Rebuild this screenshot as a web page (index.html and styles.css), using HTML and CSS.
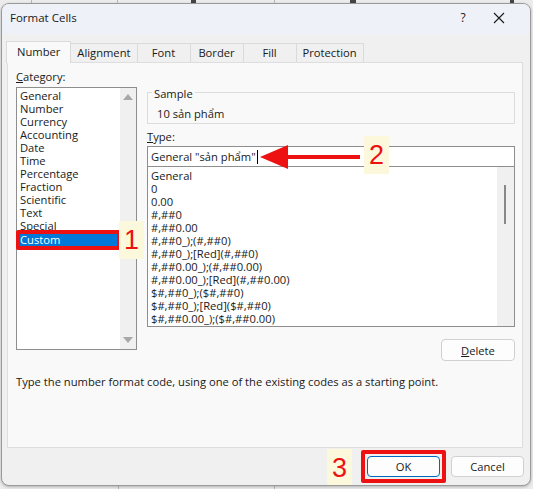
FILE: index.html
```html
<!DOCTYPE html>
<html>
<head>
<meta charset="utf-8">
<link rel="stylesheet" href="styles.css">
</head>
<body>
<div class="desk">
  <div class="dialog">
    <div class="titlebar">
      <span class="title">Format Cells</span>
      <span class="help">?</span>
      <span class="close"><svg width="12" height="12" viewBox="0 0 12 12"><path d="M1 1L11 11M11 1L1 11" stroke="#1a1a1a" stroke-width="1.1" fill="none"/></svg></span>
    </div>
    <div class="tabs">
      <div class="tab active">Number</div>
      <div class="tab">Alignment</div>
      <div class="tab">Font</div>
      <div class="tab">Border</div>
      <div class="tab">Fill</div>
      <div class="tab">Protection</div>
    </div>
    <div class="panel">
      <div class="cols">
        <div class="catcol">
          <div class="lbl"><u>C</u>ategory:</div>
          <div class="catlist">
            <div class="items">
              <div class="item">General</div>
              <div class="item">Number</div>
              <div class="item">Currency</div>
              <div class="item">Accounting</div>
              <div class="item">Date</div>
              <div class="item">Time</div>
              <div class="item">Percentage</div>
              <div class="item">Fraction</div>
              <div class="item">Scientific</div>
              <div class="item">Text</div>
              <div class="item">Special</div>
              <div class="item selected">Custom<span class="redbox"></span><span class="badge b1">1</span></div>
            </div>
            <div class="vscroll">
              <span class="arr up"></span>
              <span class="arr down"></span>
            </div>
          </div>
        </div>
        <div class="rightcol">
          <fieldset class="sample">
            <legend>Sample</legend>
            <div class="sampleval">10 sản phẩm</div>
          </fieldset>
          <div class="lbl typelbl"><u>T</u>ype:</div>
          <div class="typeinput">General "sản phẩm"<span class="caret"></span>
            <span class="arrow"><svg width="102" height="28" viewBox="0 0 102 28"><polygon points="0,14 28,2 28,26" fill="#ee1111"/><rect x="27" y="12" width="73" height="4" fill="#ee1111"/></svg></span>
            <span class="badge b2">2</span>
          </div>
          <div class="typelist">
            <div class="items">
              <div class="item">General</div>
              <div class="item">0</div>
              <div class="item">0.00</div>
              <div class="item">#,##0</div>
              <div class="item">#,##0.00</div>
              <div class="item">#,##0_);(#,##0)</div>
              <div class="item">#,##0_);[Red](#,##0)</div>
              <div class="item">#,##0.00_);(#,##0.00)</div>
              <div class="item">#,##0.00_);[Red](#,##0.00)</div>
              <div class="item">$#,##0_);($#,##0)</div>
              <div class="item">$#,##0_);[Red]($#,##0)</div>
              <div class="item">$#,##0.00_);($#,##0.00)</div>
            </div>
            <div class="vscroll2"><span class="thumb"></span></div>
          </div>
          <div class="delrow"><button class="btn del"><u>D</u>elete</button></div>
        </div>
      </div>
      <div class="hint">Type the number format code, using one of the existing codes as a starting point.</div>
    </div>
    <div class="footer">
      <span class="badge b3">3</span>
      <div class="okwrap"><button class="btn ok">OK</button></div>
      <button class="btn cancel">Cancel</button>
    </div>
  </div>
</div>
</body>
</html>
```
FILE: styles.css
```css
* { box-sizing: border-box; }
html, body { margin: 0; padding: 0; }
body {
  width: 533px; height: 489px; overflow: hidden;
  font-family: "Open Sans", "Noto Sans", sans-serif;
  font-size: 11.2px; color: #1a1a1a;
  background: #e9e9e9;
}
.desk {
  width: 533px; height: 489px;
  padding: 3px 0 0 1px;
  background:
    linear-gradient(90deg, transparent 0 31px, #b8b8b8 31px 32px, transparent 32px 117px, #b8b8b8 117px 118px, transparent 118px 191px, #444 191px 196px, transparent 196px 274px, #b8b8b8 274px 275px, transparent 275px 350px, #444 350px 356px, transparent 356px 510px, #444 510px 514px, transparent 514px) top/533px 3px no-repeat,
    linear-gradient(90deg, transparent 0 118px, #b8b8b8 118px 119px, transparent 119px 274px, #b8b8b8 274px 275px, transparent 275px) bottom/533px 3px no-repeat,
    #ececec;
}
.dialog {
  width: 530px; height: 483px;
  border: 1px solid #9a9a9a;
  border-radius: 8px;
  background: #f0f0f0;
  overflow: hidden;
  display: flex; flex-direction: column;
  box-shadow: 0 1px 3px rgba(0,0,0,0.25);
}
.titlebar {
  height: 30px; flex: none;
  background: #eef1f8;
  display: flex; align-items: center;
  padding-left: 8px; padding-bottom: 3px;
  font-size: 11.5px;
}
.title { flex: 1; }
.help { width: 12px; text-align: center; margin-right: 24px; font-size: 12px; }
.close { width: 12px; height: 12px; margin-right: 25px; display: flex; }
.tabs {
  display: flex; align-items: flex-end;
  height: 21px; margin: 7px 0 0 4px;
  flex: none; position: relative; z-index: 1;
}
.tab {
  height: 19px; padding: 0 6px 1px; min-width: 54px;
  border: 1px solid #dadada; border-bottom: none; margin-left: -1px;
  display: flex; align-items: center; justify-content: center;
  background: #f0f0f0;
}
.tab.active {
  height: 22px; background: #f9f9f9; margin-left: 0; padding: 0 10px 3px;
  margin-bottom: -1px;
}
.panel {
  margin-left: 5px; width: 516px; height: 386px; flex: none;
  background: #f9f9f9;
  border: 1px solid #dedede;
  padding: 6px 6px 0 8px;
  position: relative;
}
.cols { display: grid; grid-template-columns: 121px 368px; column-gap: 10px; }
.lbl { height: 15px; line-height: 15px; }
.catlist {
  margin-top: 3px; height: 263px;
  border: 1px solid #8e8e8e; background: #fff;
  display: flex;
}
.items { flex: 1; padding-top: 1px; }
.item { height: 13px; line-height: 13px; padding-left: 3px; white-space: nowrap; position: relative; }
.catlist .item.selected { background: #0078d7; color: #fff; margin-top: 1px; height: 14px; line-height: 14px; }
.redbox {
  position: absolute; left: -1px; right: -1px; top: -3px; bottom: -3px;
  border: 4px solid #ee1111; border-radius: 2px;
}
.badge {
  position: absolute; background: #fbf8dc; color: #ee1111; z-index: 3;
  font-family: "Liberation Sans", sans-serif; font-size: 27px; line-height: 38px;
  width: 25px; height: 38px; text-align: center;
}
.b1 { left: 102px; top: -12px; }
.vscroll {
  width: 16px; background: #f0f0f0; position: relative;
}
.arr { position: absolute; left: 3px; width: 0; height: 0; border-left: 5px solid transparent; border-right: 5px solid transparent; }
.arr.up { top: 6px; border-bottom: 6px solid #a8a8a8; }
.arr.down { bottom: 6px; border-top: 6px solid #a8a8a8; }
.sample {
  margin: 17px 0 0; padding: 0 0 0 8px;
  border: 1px solid #dcdcdc; height: 38px;
}
.sample legend { padding: 0 2px; margin-left: -4px; line-height: 13px; height: 13px; position: relative; top: 1px; }
.sampleval { line-height: 14px; margin-top: 8px; padding-left: 1px; }
.typelbl { margin-top: 5px; }
.typeinput {
  margin-top: 2px; height: 21px; line-height: 19px;
  border: 1px solid #8e8e8e; background: #fff; padding-left: 3px;
  position: relative;
}
.caret { display: inline-block; width: 1px; height: 14px; background: #000; vertical-align: -3px; margin-left: 1px; }
.arrow { position: absolute; left: 112px; top: -4px; display: block; line-height: 0; }
.b2 { left: 216px; top: -11px; }
.typelist {
  height: 160px; border: 1px solid #8e8e8e; border-top: none; background: #fff;
  display: flex; overflow: hidden;
}
.typelist .items { padding-top: 2px; }
.vscroll2 { width: 17px; background: #f0f0f0; position: relative; }
.thumb { position: absolute; left: 7px; top: 18px; width: 2px; height: 39px; background: #888; }
.delrow { display: flex; justify-content: flex-end; margin-top: 12px; }
.btn {
  font: inherit; color: #1a1a1a;
  height: 22px; width: 74px; background: #fdfdfd;
  border: 1px solid #d0d0d0; border-radius: 4px; padding: 0;
}
.hint { margin-top: 13px; }
.footer {
  flex: 1; display: flex; justify-content: flex-end; align-items: center;
  padding-right: 6px; gap: 5px; position: relative;
}
.okwrap { border: 4px solid #ee1111; padding: 2px; border-radius: 2px; }
.btn.ok { border-color: #0067c0; width: 73px; height: 21px; }
.btn.cancel { width: 73px; height: 21px; }
.b3 { position: absolute; left: 325px; top: 1px; height: 39px; line-height: 39px; }
```
